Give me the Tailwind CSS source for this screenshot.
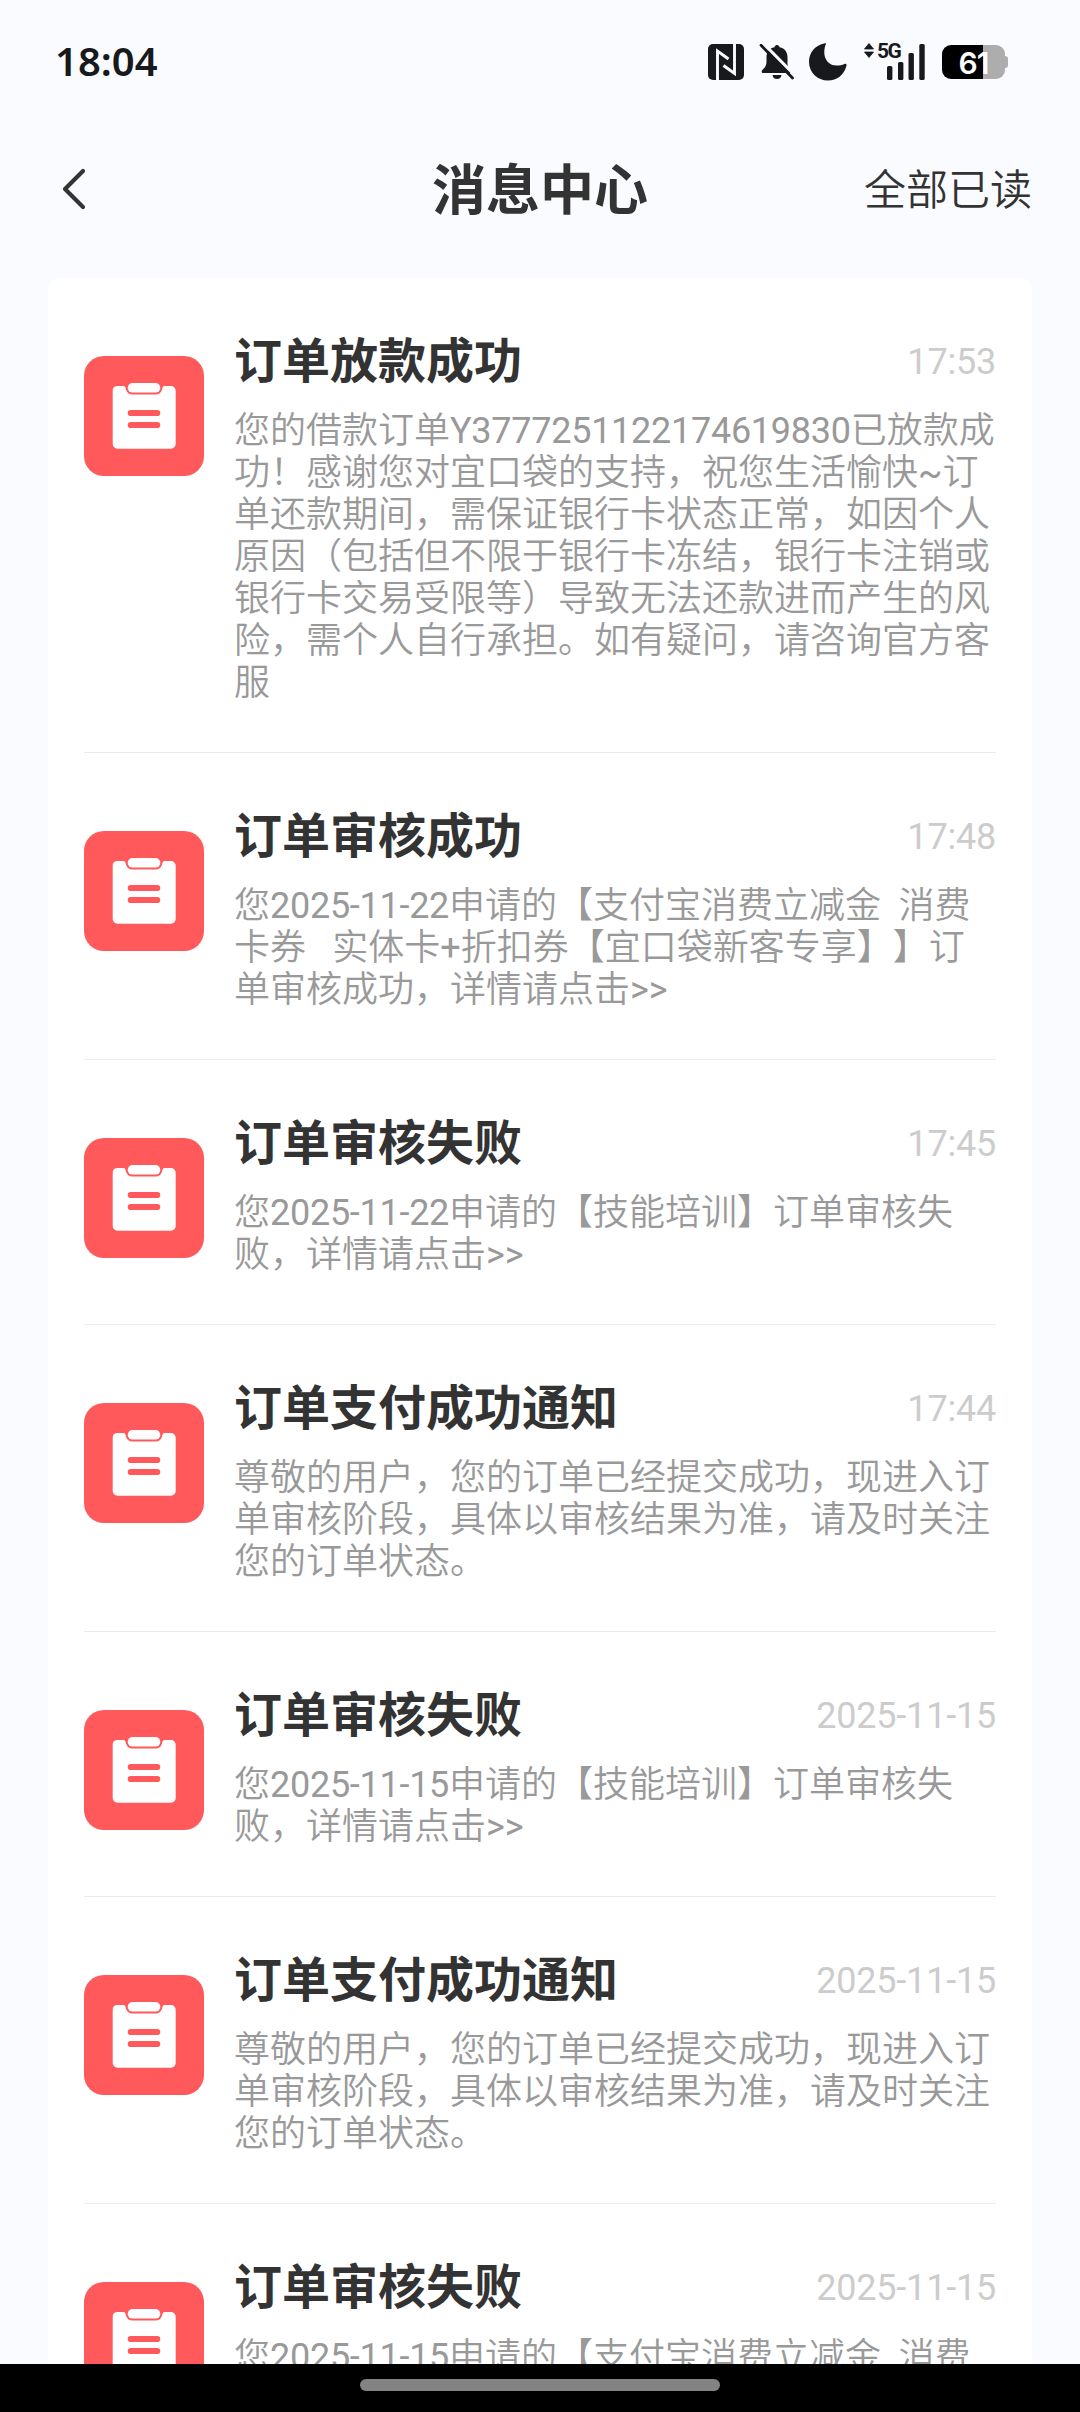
<!DOCTYPE html>
<html lang="zh-CN">
<head>
<meta charset="utf-8">
<title>消息中心</title>
<script src="https://cdn.jsdelivr.net/npm/@tailwindcss/browser@4"></script>
</head>
<body class="bg-[#fafbff]">
<svg class="hidden">
  <symbol id="order" viewBox="0 0 120 120">
    <rect width="120" height="120" rx="20" fill="#ff595b"/>
    <path d="M33 30H39C41.500 30 41.500 32 42 33.500C43 37 45 38.600 48.500 38.600H71.500C75 38.600 77 37 78 33.500C78.500 32 78.500 30 81 30H87A4.700 4.700 0 0 1 91.700 34.700V88A4.700 4.700 0 0 1 87 92.700H33.400A4.700 4.700 0 0 1 28.700 88V34.700A4.700 4.700 0 0 1 33 30Z" fill="#fff"/>
    <rect x="43.700" y="27" width="32.600" height="9.600" rx="4.800" fill="#fff"/>
    <path d="M46.800 57H73.200M46.800 69H73.200" stroke="#ff595b" stroke-width="6.200" stroke-linecap="round"/>
  </symbol>
</svg>
<div class="flex h-[2412px] w-[1080px] flex-col overflow-hidden bg-[#fafbff] font-['Roboto','Noto_Sans_CJK_SC',sans-serif] text-[#333] [text-spacing-trim:space-all]">
  <div class="flex h-[124px] shrink-0 items-center justify-between pr-[72px] pl-[55px]">
    <span class="-mt-0.5 font-['Noto_Sans',sans-serif] text-[40px] leading-none font-semibold text-[#17191c]">18:04</span>
    <div class="flex items-center text-[#17191c]">
      <svg class="h-9 w-9" viewBox="0 0 36 36"><rect width="36" height="36" rx="5" fill="currentColor"/><path d="M9.500 36V7L20.500 15M26.500 0V29.500L15.500 21.500" fill="none" stroke="#fafbff" stroke-width="2.900"/></svg>
      <svg class="ml-[15px] h-9 w-9" viewBox="0 0 36 36" fill="currentColor"><path d="M18 1C19.600 1 20.200 2 20.500 3.200C26 4.200 28.500 8.500 28.500 13V20C28.500 23 30 24.500 31.500 26C33 27.600 33 29 31.500 29H4.500C2 29 2.300 27 3.800 25.500C6 23.300 7.500 21.500 7.500 18V13C7.500 8.500 10 4.200 15.500 3.200C15.800 2 16.400 1 18 1Z"/><path d="M13.500 31H22.500C22 34 20.200 35 18 35S14 34 13.500 31Z"/><path d="M3.500 -1.500L36.500 32" stroke="#fafbff" stroke-width="3"/><path d="M2 1.200L33.500 34" stroke="currentColor" stroke-width="2.800" stroke-linecap="round"/></svg>
      <svg class="ml-[14px] h-[38px] w-[38px]" viewBox="0 0 38 38" fill="currentColor"><path d="M17 .8C13 10 16 22.500 27.500 22.500C30.500 22.500 33 22 35.500 21C37 20.500 38 21 37.400 23C35 32 28 37.500 19 37.500C8.500 37.500 0 29.500 0 19C0 9.500 6 2.500 14.800 .5C16.500 .1 17.300 0 17 .8Z"/></svg>
      <div class="relative ml-[17px] h-[38px] w-[62px]">
        <svg class="h-[38px] w-[62px]" viewBox="0 0 62 38" fill="currentColor"><path d="M5 0.500L9.500 6H.5ZM5 14.500L9.500 9H.5Z" stroke="currentColor" stroke-width=".8" stroke-linejoin="round"/><rect x="23" y="23" width="5.400" height="14" rx="1.500"/><rect x="34" y="19" width="5.400" height="18" rx="1.500"/><rect x="44.500" y="10" width="5.400" height="27" rx="1.500"/><rect x="55.300" y="1" width="5.400" height="36" rx="1.500"/></svg>
        <span class="absolute top-[-3px] left-[13px] text-[21px] leading-[22px] font-bold tracking-[-1.5px]">5G</span>
      </div>
      <div class="ml-4 flex items-center">
        <div class="flex h-[34px] w-[63px] items-center justify-center rounded-[9px] bg-linear-to-r from-black from-65% to-[#adadad] to-65% pt-0.5">
          <span class="font-['Inter',sans-serif] text-[30px] leading-none font-semibold tracking-[-1px] text-white">61</span>
        </div>
        <div class="h-3 w-[3px] rounded-r-[3px] bg-[#adadad]"></div>
      </div>
    </div>
  </div>
  <div class="grid h-[154px] shrink-0 grid-cols-[1fr_auto_1fr] items-center px-12 pb-[22px]">
    <svg class="-mt-0.5 ml-[12px] h-[46px] w-7" viewBox="0 0 28 46" fill="none" stroke="#333" stroke-width="4.200" stroke-linecap="round" stroke-linejoin="round"><path d="M23 5L5 23L23 41"/></svg>
    <h1 class="mt-1 text-[54px] leading-[64px] font-bold">消息中心</h1>
    <span class="mt-0.5 justify-self-end text-[42px] leading-[60px] font-[350]">全部已读</span>
  </div>
  <main class="mx-12 min-h-0 flex-1 overflow-hidden rounded-t-xl bg-white px-9">
    <article class="flex gap-[30px] border-b border-[#ebebeb] pt-[50px] pb-12">
      <svg class="mt-7 h-[120px] w-[120px] shrink-0"><use href="#order"/></svg>
      <div class="min-w-0 flex-1"><div class="mb-3.5 flex h-[68px] items-center justify-between"><h2 class="text-5xl leading-[68px] font-bold">订单放款成功</h2><time class="text-4xl tracking-[-0.2px] text-[#ccc]">17:53</time></div>
      <p class="text-4xl leading-[42px] font-[350] whitespace-pre text-[#999]">您的借款订单<span class="font-normal tracking-[-0.27px]">Y3777251122174619830</span>已放款成
功！感谢您对宜口袋的支持，祝您生活愉快<span class="font-normal">~</span>订
单还款期间，需保证银行卡状态正常，如因个人
原因（包括但不限于银行卡冻结，银行卡注销或
银行卡交易受限等）导致无法还款进而产生的风
险，需个人自行承担。如有疑问，请咨询官方客
服</p></div>
    </article>
    <article class="flex gap-[30px] border-b border-[#ebebeb] pt-[50px] pb-12">
      <svg class="mt-7 h-[120px] w-[120px] shrink-0"><use href="#order"/></svg>
      <div class="min-w-0 flex-1"><div class="mb-3.5 flex h-[68px] items-center justify-between"><h2 class="text-5xl leading-[68px] font-bold">订单审核成功</h2><time class="text-4xl tracking-[-0.2px] text-[#ccc]">17:48</time></div>
      <p class="text-4xl leading-[42px] font-[350] whitespace-pre text-[#999]">您<span class="font-normal tracking-[-0.27px]">2025-11-22</span>申请的【支付宝消费立减金  消费
卡券   实体卡<span class="font-normal">+</span>折扣券【宜口袋新客专享】】订
单审核成功，详情请点击<span class="font-normal">&gt;&gt;</span></p></div>
    </article>
    <article class="flex gap-[30px] border-b border-[#ebebeb] pt-[50px] pb-12">
      <svg class="mt-7 h-[120px] w-[120px] shrink-0"><use href="#order"/></svg>
      <div class="min-w-0 flex-1"><div class="mb-3.5 flex h-[68px] items-center justify-between"><h2 class="text-5xl leading-[68px] font-bold">订单审核失败</h2><time class="text-4xl tracking-[-0.2px] text-[#ccc]">17:45</time></div>
      <p class="text-4xl leading-[42px] font-[350] whitespace-pre text-[#999]">您<span class="font-normal tracking-[-0.27px]">2025-11-22</span>申请的【技能培训】订单审核失
败，详情请点击<span class="font-normal">&gt;&gt;</span></p></div>
    </article>
    <article class="flex gap-[30px] border-b border-[#ebebeb] pt-[50px] pb-12">
      <svg class="mt-7 h-[120px] w-[120px] shrink-0"><use href="#order"/></svg>
      <div class="min-w-0 flex-1"><div class="mb-3.5 flex h-[68px] items-center justify-between"><h2 class="text-5xl leading-[68px] font-bold">订单支付成功通知</h2><time class="text-4xl tracking-[-0.2px] text-[#ccc]">17:44</time></div>
      <p class="text-4xl leading-[42px] font-[350] whitespace-pre text-[#999]">尊敬的用户，您的订单已经提交成功，现进入订
单审核阶段，具体以审核结果为准，请及时关注
您的订单状态。</p></div>
    </article>
    <article class="flex gap-[30px] border-b border-[#ebebeb] pt-[50px] pb-12">
      <svg class="mt-7 h-[120px] w-[120px] shrink-0"><use href="#order"/></svg>
      <div class="min-w-0 flex-1"><div class="mb-3.5 flex h-[68px] items-center justify-between"><h2 class="text-5xl leading-[68px] font-bold">订单审核失败</h2><time class="text-4xl tracking-[-0.2px] text-[#ccc]">2025-11-15</time></div>
      <p class="text-4xl leading-[42px] font-[350] whitespace-pre text-[#999]">您<span class="font-normal tracking-[-0.27px]">2025-11-15</span>申请的【技能培训】订单审核失
败，详情请点击<span class="font-normal">&gt;&gt;</span></p></div>
    </article>
    <article class="flex gap-[30px] border-b border-[#ebebeb] pt-[50px] pb-12">
      <svg class="mt-7 h-[120px] w-[120px] shrink-0"><use href="#order"/></svg>
      <div class="min-w-0 flex-1"><div class="mb-3.5 flex h-[68px] items-center justify-between"><h2 class="text-5xl leading-[68px] font-bold">订单支付成功通知</h2><time class="text-4xl tracking-[-0.2px] text-[#ccc]">2025-11-15</time></div>
      <p class="text-4xl leading-[42px] font-[350] whitespace-pre text-[#999]">尊敬的用户，您的订单已经提交成功，现进入订
单审核阶段，具体以审核结果为准，请及时关注
您的订单状态。</p></div>
    </article>
    <article class="flex gap-[30px] pt-[50px]">
      <svg class="mt-7 h-[120px] w-[120px] shrink-0"><use href="#order"/></svg>
      <div class="min-w-0 flex-1"><div class="mb-3.5 flex h-[68px] items-center justify-between"><h2 class="text-5xl leading-[68px] font-bold">订单审核失败</h2><time class="text-4xl tracking-[-0.2px] text-[#ccc]">2025-11-15</time></div>
      <p class="text-4xl leading-[42px] font-[350] whitespace-pre text-[#999]">您<span class="font-normal tracking-[-0.27px]">2025-11-15</span>申请的【支付宝消费立减金  消费</p></div>
    </article>
  </main>
  <div class="flex h-12 shrink-0 justify-center bg-black pt-[15px]"><div class="h-3 w-[360px] rounded-full bg-[#838383]"></div></div>
</div>
</body>
</html>
